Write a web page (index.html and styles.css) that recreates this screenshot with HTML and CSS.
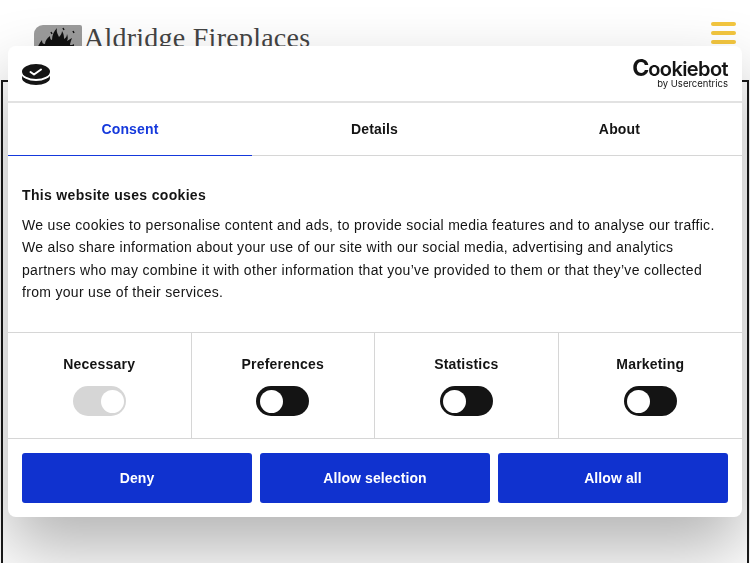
FILE: index.html
```html
<!DOCTYPE html>
<html lang="en">
<head>
    <meta charset="UTF-8">
    <title>Aldridge Fireplaces</title>
    <link rel="stylesheet" href="styles.css">
</head>
<body>

<header class="site-header">
    <a href="#" class="site-logo">
        <span class="logo-badge">
            <svg width="48" height="26" viewBox="0 0 48 26">
                <path d="M4 26C3 22 5 19 8 15c0 3 1 4 3 4 0-3 2-6 5-8 0 3 1 4 2 4 0-5 2-9 5-12-1 4 1 6 2 9 2-2 3-4 3-6 2 3 2 6 2 8 2-1 3-3 3-5 1 3 1 5 0 7 2-1 3-2 5-3-1 3-2 5-2 7 1 0 3 0 4-1 0 2 0 5-1 7z" fill="#111"/>
                <path d="M17 7l1 2M29 3l1 2M39 6l1 2" stroke="#111" stroke-width="1.5" fill="none"/>
            </svg>
        </span>
        <span class="logo-name">Aldridge Fireplaces</span>
    </a>
    <button class="menu-btn" aria-label="Menu">
        <span></span><span></span><span></span>
    </button>
</header>

<main class="site-frame"></main>

<div class="cookie-dialog">
    <div class="dialog-top">
        <svg class="cookie-mark" width="28" height="21" viewBox="0 0 28 21">
            <ellipse cx="14" cy="14" rx="14" ry="7" fill="#141414"/>
            <ellipse cx="14" cy="9.5" rx="14.5" ry="7.5" fill="#fff"/>
            <ellipse cx="14" cy="7.5" rx="14" ry="7.5" fill="#141414"/>
            <path d="M8.5 8l3.5 2.5L19 5.5" fill="none" stroke="#fff" stroke-width="2" stroke-linecap="round" stroke-linejoin="round"/>
        </svg>
        <div class="cb-logo">
            <span class="cb-name"><b>C</b>ookiebot</span>
            <span class="cb-by">by Usercentrics</span>
        </div>
    </div>

    <nav class="tabs">
        <a href="#" class="tab active">Consent</a>
        <a href="#" class="tab">Details</a>
        <a href="#" class="tab">About</a>
    </nav>

    <section class="consent-text">
        <h2>This website uses cookies</h2>
        <p>We use cookies to personalise content and ads, to provide social media features and to analyse our traffic. We also share information about your use of our site with our social media, advertising and analytics partners who may combine it with other information that you’ve provided to them or that they’ve collected from your use of their services.</p>
    </section>

    <div class="toggles">
        <div class="toggle-cell">
            <strong>Necessary</strong>
            <span class="switch locked"></span>
        </div>
        <div class="toggle-cell">
            <strong>Preferences</strong>
            <span class="switch"></span>
        </div>
        <div class="toggle-cell">
            <strong>Statistics</strong>
            <span class="switch"></span>
        </div>
        <div class="toggle-cell">
            <strong>Marketing</strong>
            <span class="switch"></span>
        </div>
    </div>

    <div class="actions">
        <button class="action-btn">Deny</button>
        <button class="action-btn">Allow selection</button>
        <button class="action-btn">Allow all</button>
    </div>
</div>

</body>
</html>
```

FILE: styles.css
```css
html, body {
    height: 100%;
}

body {
    margin: 0;
    overflow: hidden;
    display: flex;
    flex-direction: column;
    font-family: "Liberation Sans", Arial, sans-serif;
    color: #141414;
    background-color: #fff;
}

/* header behind the dialog */
.site-header {
    height: 80px;
    box-sizing: border-box;
    padding: 20px 14px 0 34px;
    display: flex;
    justify-content: space-between;
    align-items: flex-start;
}

.site-logo {
    display: flex;
    gap: 2px;
    text-decoration: none;
    padding-top: 5px;
}

.logo-badge {
    width: 48px;
    height: 26px;
    background-color: #9c9c9c;
    border-radius: 9px 2px 0 0;
}

.logo-badge svg {
    display: block;
}

.logo-name {
    font-family: "Liberation Serif", serif;
    font-size: 28px;
    line-height: 26px;
    letter-spacing: 0.25px;
    color: #444;
}

.menu-btn {
    width: 25px;
    padding: 2px 0 0;
    border: 0;
    background: none;
    display: flex;
    flex-direction: column;
    gap: 5px;
}

.menu-btn span {
    height: 4px;
    border-radius: 2px;
    background-color: #f3c63f;
}

.site-frame {
    flex: 1;
    margin: 0 1px;
    border: solid #1a1a1a;
    border-width: 2px 2px 0;
}

/* dialog */
.cookie-dialog {
    position: fixed;
    top: 46px;
    left: 8px;
    width: 734px;
    height: 471px;
    display: flex;
    flex-direction: column;
    background-color: #fff;
    border-radius: 8px;
    box-shadow: 0 32px 68px rgba(0, 0, 0, 0.3);
}

.dialog-top {
    height: 55px;
    padding: 0 14px;
    display: flex;
    justify-content: space-between;
    align-items: center;
    border-bottom: 2px solid #e2e2e2;
}

.cookie-mark {
    display: block;
    margin-top: 1px;
}

.cb-logo {
    display: flex;
    flex-direction: column;
    align-items: flex-end;
    gap: 1px;
    margin-top: 1px;
    font-family: "Inter", sans-serif;
}

.cb-name {
    font-size: 20px;
    line-height: 18px;
    font-weight: 600;
    letter-spacing: -0.6px;
}

.cb-name b {
    font-size: 23px;
    font-weight: 700;
    letter-spacing: -1px;
}

.cb-by {
    font-size: 9.5px;
    line-height: 10px;
}

.tabs {
    display: grid;
    grid-template-columns: 244px 245px 245px;
}

.tab {
    height: 52px;
    display: flex;
    align-items: center;
    justify-content: center;
    border-bottom: 1px solid #d6d6d6;
    font-size: 14px;
    font-weight: bold;
    letter-spacing: 0.17px;
    text-decoration: none;
    color: #141414;
}

.tab.active {
    color: #1539dc;
    border-bottom-color: #1539dc;
}

.consent-text {
    flex: 1;
    padding: 32px 14px 0;
}

.consent-text h2 {
    margin: 0 0 11px;
    font-size: 14px;
    line-height: 15px;
    font-weight: bold;
    letter-spacing: 0.33px;
}

.consent-text p {
    margin: 0;
    font-size: 14px;
    line-height: 22.4px;
    letter-spacing: 0.31px;
}

.toggles {
    height: 105px;
    display: grid;
    grid-template-columns: repeat(4, 1fr);
    border-top: 1px solid #d6d6d6;
    border-bottom: 1px solid #d6d6d6;
}

.toggle-cell {
    display: flex;
    flex-direction: column;
    align-items: center;
    gap: 14px;
    padding-top: 23px;
    border-right: 1px solid #d6d6d6;
    font-size: 14px;
    line-height: 16px;
    letter-spacing: 0.2px;
}

.toggle-cell:last-child {
    border-right: 0;
}

.switch {
    width: 53px;
    height: 30px;
    box-sizing: border-box;
    padding: 3.5px;
    border-radius: 15px;
    background-color: #141414;
    display: flex;
}

.switch::before {
    content: "";
    width: 23px;
    height: 23px;
    border-radius: 50%;
    background-color: #fff;
}

.switch.locked {
    background-color: #d6d6d6;
    justify-content: flex-end;
    padding-right: 2px;
}

.actions {
    padding: 14px;
    display: grid;
    grid-template-columns: repeat(3, 1fr);
    gap: 8px;
}

.action-btn {
    height: 50px;
    border: 0;
    border-radius: 3px;
    background-color: #1032cf;
    color: #fff;
    font-family: inherit;
    font-size: 14px;
    font-weight: bold;
    letter-spacing: 0.1px;
}
```
